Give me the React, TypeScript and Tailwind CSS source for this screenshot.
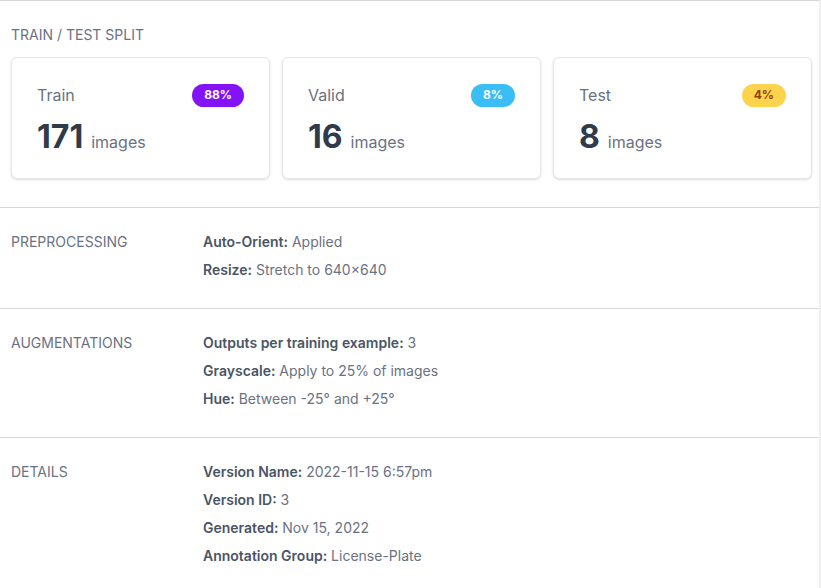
const splits = [
  { name: 'Train', count: 171, pct: '88%', badge: 'bg-[#8412f6] text-white' },
  { name: 'Valid', count: 16, pct: '8%', badge: 'bg-[#3bbdf8] text-white' },
  { name: 'Test', count: 8, pct: '4%', badge: 'bg-[#fcd34d] text-[#92400e]' },
]

const sections = [
  {
    title: 'Preprocessing',
    rows: [
      ['Auto-Orient', 'Applied'],
      ['Resize', 'Stretch to 640×640'],
    ],
  },
  {
    title: 'Augmentations',
    rows: [
      ['Outputs per training example', '3'],
      ['Grayscale', 'Apply to 25% of images'],
      ['Hue', 'Between -25° and +25°'],
    ],
  },
  {
    title: 'Details',
    rows: [
      ['Version Name', '2022-11-15 6:57pm'],
      ['Version ID', '3'],
      ['Generated', 'Nov 15, 2022'],
      ['Annotation Group', 'License-Plate'],
    ],
  },
]

export default function App() {
  return (
    <div className="flex h-[588px] w-[821px] overflow-hidden bg-white font-['Inter',sans-serif]">
      <div className="w-[819px] border-t border-[#d4d6dc]">
        <div className="border-b border-[#d4d6dc] px-[11px] pt-6 pb-7">
          <p className="text-sm leading-5 uppercase text-gray-500">Train / Test Split</p>
          <div className="mt-3 grid w-[801px] grid-cols-3 gap-3">
            {splits.map((s) => (
              <div key={s.name} className="h-[122px] rounded-md border border-gray-200 bg-white px-[25px] pt-[25px] shadow-sm">
                <div className="flex items-center justify-between">
                  <span className="text-base text-gray-500">{s.name}</span>
                  <span className={`flex h-[23px] items-center rounded-full px-3 text-xs font-bold ${s.badge}`}>{s.pct}</span>
                </div>
                <div className="mt-[10px] flex items-baseline gap-2">
                  <span className="text-[32px] leading-10 font-bold text-[#2f3a4b]">{s.count}</span>
                  <span className="text-base text-gray-500">images</span>
                </div>
              </div>
            ))}
          </div>
        </div>

        {sections.map((sec) => (
          <div key={sec.title} className="flex border-b border-[#d4d6dc] px-[11px] pt-6 pb-7">
            <div className="w-[192px] text-sm leading-5 uppercase text-gray-500">{sec.title}</div>
            <div className="flex flex-col gap-2">
              {sec.rows.map(([k, v]) => (
                <p key={k} className="text-sm leading-5 text-gray-500">
                  <span className="font-semibold text-gray-600">{k}:</span> {v}
                </p>
              ))}
            </div>
          </div>
        ))}
      </div>
      <div className="w-[2px] bg-[#eeeeee]" />
    </div>
  )
}
